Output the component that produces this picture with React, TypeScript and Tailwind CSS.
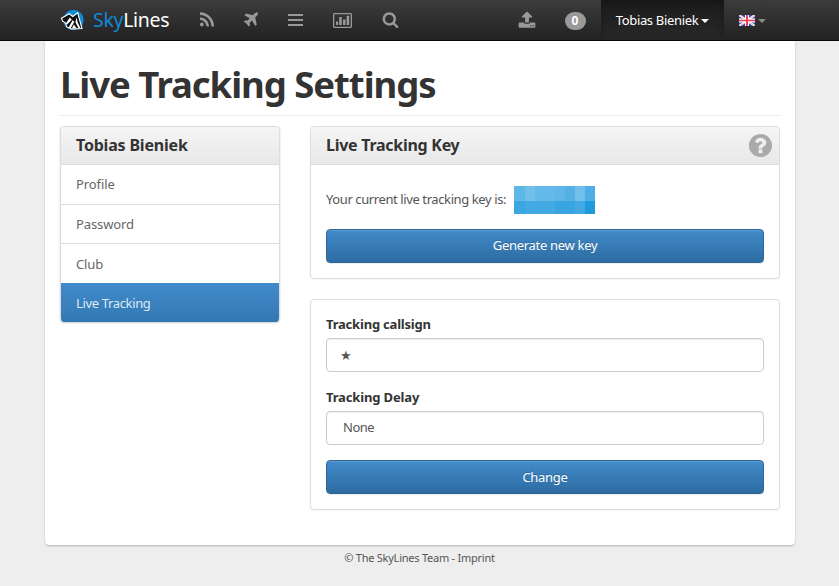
import React from "react";

const RSS =
  "M576 1344q0 80-56 136t-136 56-136-56-56-136 56-136 136-56 136 56 56 136zm512 123q2 28-17 48-18 21-47 21h-135q-25 0-43-16.5t-20-41.5q-22-229-184.5-391.5t-391.5-184.5q-25-2-41.5-20t-16.5-43v-135q0-29 21-47 17-17 43-17h5q160 13 306 80.5t259 181.5q114 113 181.5 259t80.5 306zm512 2q2 27-18 47-18 20-46 20h-143q-26 0-44.5-17.5t-19.5-42.5q-12-215-101-408.5t-231.5-336-336-231.5-408.5-102q-25-1-42.5-19.5t-17.5-43.5v-143q0-28 20-46 18-18 44-18h3q262 13 501.5 120t425.5 294q187 186 294 425.5t120 501.5z";
const PLANE =
  "M1568 160q44 52 12 148t-108 172l-161 161 160 696q5 19-12 33l-128 96q-7 6-19 6-4 0-7-1-15-3-21-16l-279-508-259 259 53 194q5 17-8 31l-96 96q-9 9-23 9h-2q-15-2-24-13l-189-252-252-189q-11-7-13-23-1-13 9-25l96-97q9-9 23-9 6 0 8 1l194 53 259-259-508-279q-14-8-17-24-2-16 9-27l128-128q14-13 30-8l665 159 160-160q76-76 172-108t148 12z";
const SEARCH =
  "M1216 832q0-185-131.5-316.5t-316.5-131.5-316.5 131.5-131.5 316.5 131.5 316.5 316.5 131.5 316.5-131.5 131.5-316.5zm512 832q0 52-38 90t-90 38q-54 0-90-38l-343-342q-179 124-399 124-143 0-273.5-55.5t-225-150-150-225-55.5-273.5 55.5-273.5 150-225 225-150 273.5-55.5 273.5 55.5 225 150 150 225 55.5 273.5q0 220-124 399l343 343q37 37 37 90z";
const UPLOAD =
  "M1344 1472q0-26-19-45t-45-19-45 19-19 45 19 45 45 19 45-19 19-45zm256 0q0-26-19-45t-45-19-45 19-19 45 19 45 45 19 45-19 19-45zm128-224v320q0 40-28 68t-68 28h-1472q-40 0-68-28t-28-68v-320q0-40 28-68t68-28h427q21 56 70.5 92t110.5 36h256q61 0 110.5-36t70.5-92h427q40 0 68 28t28 68zm-325-648q-17 40-59 40h-256v448q0 26-19 45t-45 19h-256q-26 0-45-19t-19-45v-448h-256q-42 0-59-40-17-39 14-69l448-448q18-19 45-19t45 19l448 448q31 30 14 69z";
const QUESTION =
  "M1024 1376v-192q0-14-9-23t-23-9h-192q-14 0-23 9t-9 23v192q0 14 9 23t23 9h192q14 0 23-9t9-23zm256-672q0-88-55.5-163t-138.5-116-170-41q-243 0-371 213-15 24 8 42l132 100q7 6 19 6 16 0 25-12 53-68 86-92 34-24 86-24 48 0 85.500 26t37.500 59q0 38-20 61t-68 45q-63 28-115.500 86.500t-52.500 125.500v36q0 14 9 23t23 9h192q14 0 23-9t9-23q0-19 21.500-49.500t54.500-49.500q32-18 49-28.500t46-35 44.500-48 28-60.500 12.500-81zm384 192q0 209-103 385.500t-279.500 279.500-385.500 103-385.500-103-279.500-279.500-103-385.500 103-385.500 279.500-279.500 385.500-103 385.500 103 279.500 279.500 103 385.500z";

function Icon({ d, box = "0 0 1792 1792", className }: { d: string; box?: string; className: string }) {
  return (
    <svg viewBox={box} fill="currentColor" className={`shrink-0 ${className}`}>
      <path d={d} />
    </svg>
  );
}

function Logo() {
  return (
    <svg viewBox="0 0 24 22" className="h-[22px] w-6 shrink-0">
      <circle cx="13.5" cy="11" r="10.2" fill="#0e8ad6" />
      <path
        d="M1.500 9.200 9.200 4.700l3.600 2.800 4.900-3.700 4.300 15.700-3.500.2-7.500.2-4.500-2.200-.8-3.300L2.500 12z"
        fill="#111"
        stroke="#fff"
        strokeWidth="1.100"
      />
      <path d="m9.800 8.600 2 2.200-5 5-1-1.200zM12.600 11.200l1.700 1.500-3.500 6.300-2.300-.3z" fill="#fff" />
      <path d="m16.600 8.300 1 5 2.800 5.700-2 .1-3-5.800z" fill="#fff" />
      <path d="m13.800 15.500 2.700 3.800h-4.400z" fill="#fff" />
    </svg>
  );
}

function Flag() {
  return (
    <svg viewBox="0 0 16 11" className="h-[11px] w-4 shrink-0">
      <rect width="16" height="11" fill="#3546b4" />
      <path d="M0 0 16 11M16 0 0 11" stroke="#fff" strokeWidth="2.2" />
      <path d="M0 0 16 11M16 0 0 11" stroke="#f08a90" strokeWidth="0.7" />
      <path d="M8 0V11M0 5.5H16" stroke="#fff" strokeWidth="4" />
      <path d="M8 0V11" stroke="#ee4050" strokeWidth="2" />
      <path d="M0 5.5H16" stroke="#ee4050" strokeWidth="1.6" />
    </svg>
  );
}

function Caret({ className }: { className: string }) {
  return <span className={`h-0 w-0 border-x-4 border-x-transparent ${className}`} />;
}

function Navbar() {
  return (
    <nav className="flex h-[41px] items-stretch border-b border-[#080808] bg-linear-to-b from-[#3c3c3c] to-[#222] text-[#999]">
      <div className="flex w-[185px] items-center pl-[60px]">
        <Logo />
        <span className="ml-[9px] text-[19.5px] tracking-[-0.3px] text-white">
          <span className="text-[#0e8ad6]">Sky</span>Lines
        </span>
      </div>
      <div className="flex items-center">
        <div className="flex w-11 justify-center"><Icon d={RSS} className="size-[18px]" /></div>
        <div className="flex w-11 justify-center"><Icon d={PLANE} className="size-[18px]" /></div>
        <div className="flex w-11 justify-center">
          <svg viewBox="0 0 15 12" className="h-3 w-[15px]" fill="currentColor">
            <path d="M0 0h15v2H0zM0 5h15v2H0zM0 10h15v2H0z" />
          </svg>
        </div>
        <div className="flex w-[50px] justify-center">
          <svg viewBox="0 0 19 15" className="h-[15px] w-[19px]" fill="currentColor">
            <path fillRule="evenodd" d="M1 0h17l1 1v13l-1 1H1l-1-1V1zM1.300 1.300v12.400h16.400V1.300z" />
            <path d="M3 8.500h2.200V12H3zM6.200 4h2.600v8H6.200zM10 6.500h2.500V12H10zM13.600 2.800h2.600V12h-2.600z" />
          </svg>
        </div>
        <div className="flex w-[46px] justify-center pb-px"><Icon d={SEARCH} className="size-[17px]" /></div>
      </div>
      <div className="ml-auto flex items-stretch">
        <div className="flex w-12 items-center justify-center"><Icon d={UPLOAD} className="size-[18px]" /></div>
        <div className="flex w-[50px] items-center justify-center pt-px pr-0.5">
          <span className="flex h-[18px] w-[21px] items-center justify-center rounded-full bg-[#999] text-[12px] font-bold text-white">0</span>
        </div>
        <div className="flex w-[123px] items-center justify-center gap-[3px] bg-linear-to-b from-[#1c1c1c] to-[#282828] pt-px text-[13px] text-white shadow-[inset_0_3px_9px_rgba(0,0,0,0.25)]">
          <span className="tracking-[-0.33px] whitespace-nowrap">Tobias Bieniek</span>
          <Caret className="border-t-4 border-t-white" />
        </div>
        <div className="flex w-[115px] items-center gap-[3px] pl-[15px]">
          <Flag />
          <Caret className="mt-px border-t-4 border-t-[#888]" />
        </div>
      </div>
    </nav>
  );
}

const links = [
  { name: "Profile", style: "h-[40px] border-b border-[#ddd]" },
  { name: "Password", style: "h-[39px] border-b border-[#ddd] pt-px" },
  { name: "Club", style: "h-[39px] pt-0.5" },
];

function Sidebar() {
  return (
    <aside className="h-[196px] w-[220px] overflow-hidden rounded border border-b-0 border-[#ddd] text-[13px] shadow-[0_1px_2px_rgba(0,0,0,0.2)]">
      <h3 className="flex h-[38px] items-center border-b border-[#ddd] bg-linear-to-b from-[#f5f5f5] to-[#e8e8e8] pb-0.5 pl-[15px] text-base font-bold tracking-[-0.2px]">
        Tobias Bieniek
      </h3>
      {links.map((l) => (
        <a key={l.name} className={`flex items-center pl-[15px] tracking-[-0.1px] text-[#666] ${l.style}`}>
          {l.name}
        </a>
      ))}
      <a className="flex h-[39px] items-center bg-linear-to-b from-[#428bca] to-[#3278b3] pt-0.5 pl-[15px] tracking-[-0.35px] text-[#dcebf7]">
        Live Tracking
      </a>
    </aside>
  );
}

function Button({ children }: { children: React.ReactNode }) {
  return (
    <button className="flex h-[34px] w-full items-center justify-center rounded border border-[#2b669a] bg-linear-to-b from-[#428bca] to-[#2d6ca2] text-[13px] tracking-[-0.3px] text-white shadow-[inset_0_1px_0_rgba(255,255,255,0.15),0_1px_1px_rgba(0,0,0,0.075)] [text-shadow:0_-1px_0_rgba(0,0,0,0.2)]">
      {children}
    </button>
  );
}

const topCells = ["bg-[#5fb7e8]", "bg-[#70c0eb]", "bg-[#64b9e8]", "bg-[#64b9e8]", "bg-[#5eb7e8]", "bg-[#54b1e6]", "bg-[#70c0eb]", "bg-[#4dafe5]"];
const bottomCells = ["bg-[#3ca6e1]", "bg-[#43a9e2]", "bg-[#43a9e2]", "bg-[#43a9e2]", "bg-[#38a5e2]", "bg-[#38a5e2]", "bg-[#43a9e2]", "bg-[#1f9add]"];

function MaskedKey() {
  return (
    <span className="ml-2 grid h-7 w-[81px] grid-cols-[11px_10px_10px_10px_10px_10px_10px_10px] grid-rows-[15px_13px]">
      {[...topCells, ...bottomCells].map((c, i) => (
        <span key={i} className={c} />
      ))}
    </span>
  );
}

export default function App() {
  return (
    <div className="h-[586px] w-[839px] overflow-hidden bg-[#eee] font-['Noto_Sans','Open_Sans',sans-serif] text-[#333]">
      <Navbar />
      <main className="ml-[45px] h-[504px] w-[750px] rounded-b-[4px] bg-white px-[15px] pt-[18px] shadow-[0_1px_2px_rgba(0,0,0,0.25)]">
        <h1 className="flex h-[57px] items-center border-b border-[#eee] text-[36.500px] font-bold whitespace-nowrap tracking-[-1.04px]">
          <span className="-mt-1.5">Live Tracking Settings</span>
        </h1>
        <div className="mt-[10px] flex items-start gap-[30px]">
          <Sidebar />
          <div className="flex w-[470px] flex-col gap-5">
            <section className="h-[153px] overflow-hidden rounded border border-[#ddd] shadow-[0_1px_2px_rgba(0,0,0,0.05)]">
              <div className="flex h-[38px] items-center justify-between border-b border-[#ddd] bg-linear-to-b from-[#f5f5f5] to-[#e8e8e8] pr-[5px] pl-[15px]">
                <h3 className="pb-0.5 text-base font-bold tracking-[-0.27px]">Live Tracking Key</h3>
                <Icon d={QUESTION} className="size-[27px] text-[#aaa]" />
              </div>
              <div className="px-[15px] pt-[21px]">
                <p className="mb-[15px] flex h-7 items-center text-[13px] text-[#555]">
                  <span className="w-[180px] tracking-[-0.4px] whitespace-nowrap">Your current live tracking key is:</span>
                  <MaskedKey />
                </p>
                <Button>Generate new key</Button>
              </div>
            </section>
            <section className="h-[211px] rounded border border-[#ddd] px-[15px] pt-4 text-[13px] shadow-[0_1px_2px_rgba(0,0,0,0.05)]">
              <label className="flex h-[18px] items-center font-bold tracking-[-0.2px]">Tracking callsign</label>
              <div className="mt-1 flex h-[34px] items-center rounded border border-[#ccc] pt-0.5 pl-[13px] text-[#555] shadow-[inset_0_1px_1px_rgba(0,0,0,0.075)]">
                <span className="font-['DejaVu_Sans',sans-serif]">★</span>
              </div>
              <label className="mt-[17px] flex h-[18px] items-center font-bold tracking-[-0.15px]">Tracking Delay</label>
              <div className="mt-1 mb-[15px] flex h-[34px] items-center rounded border border-[#ccc] pl-4 tracking-[-0.5px] text-[#555] shadow-[inset_0_1px_1px_rgba(0,0,0,0.075)]">
                None
              </div>
              <Button><span className="pt-0.5">Change</span></Button>
            </section>
          </div>
        </div>
      </main>
      <footer className="flex h-[26px] items-center justify-center text-[11px] tracking-[-0.24px] text-[#555]">
        © The SkyLines Team - Imprint
      </footer>
    </div>
  );
}
